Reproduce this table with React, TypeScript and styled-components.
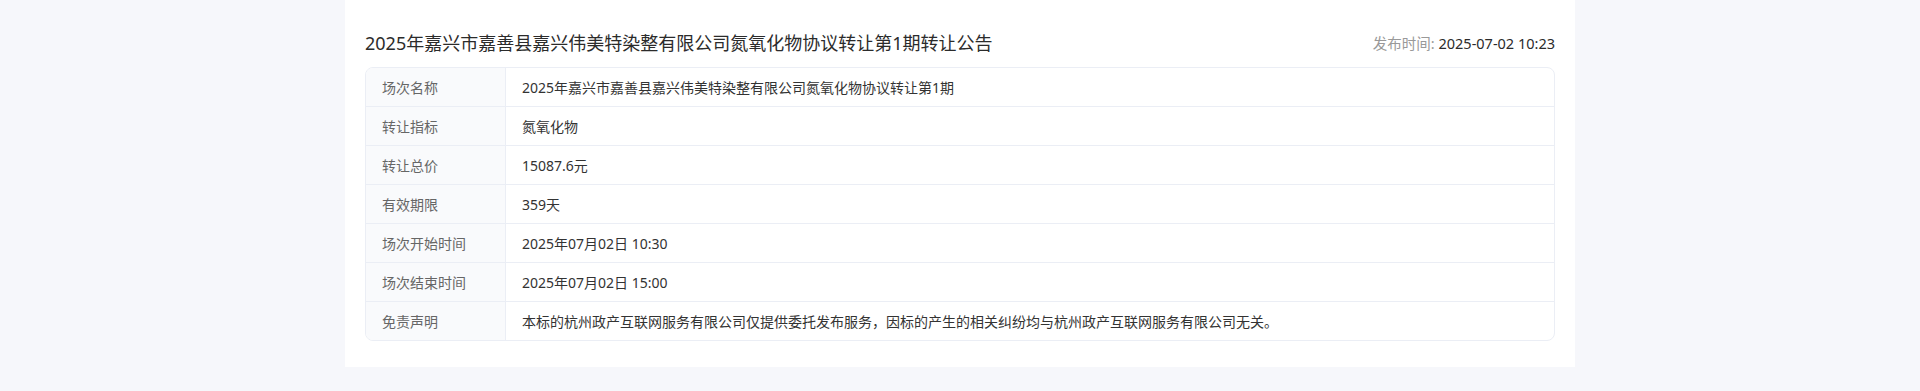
import styled, { createGlobalStyle } from 'styled-components';

type TRow = {
  label: string;
  value: string;
};

const rows: TRow[] = [
  { label: '场次名称', value: '2025年嘉兴市嘉善县嘉兴伟美特染整有限公司氮氧化物协议转让第1期' },
  { label: '转让指标', value: '氮氧化物' },
  { label: '转让总价', value: '15087.6元' },
  { label: '有效期限', value: '359天' },
  { label: '场次开始时间', value: '2025年07月02日 10:30' },
  { label: '场次结束时间', value: '2025年07月02日 15:00' },
  {
    label: '免责声明',
    value:
      '本标的杭州政产互联网服务有限公司仅提供委托发布服务，因标的产生的相关纠纷均与杭州政产互联网服务有限公司无关。',
  },
];

export default function App() {
  return (
    <>
      <GlobalStyle />
      <Page>
        <Card>
          <Header>
            <Title>2025年嘉兴市嘉善县嘉兴伟美特染整有限公司氮氧化物协议转让第1期转让公告</Title>
            <PublishTime>
              <span className='label'>发布时间: </span>
              <span className='value'>2025-07-02 10:23</span>
            </PublishTime>
          </Header>
          <InfoTable>
            {rows.map((row) => (
              <Row key={row.label}>
                <LabelCell>{row.label}</LabelCell>
                <ValueCell>{row.value}</ValueCell>
              </Row>
            ))}
          </InfoTable>
        </Card>
      </Page>
    </>
  );
}

const GlobalStyle = createGlobalStyle`
  body {
    margin: 0;
    background-color: #f6f7fb;
    font-family: 'Noto Sans', 'Noto Sans CJK SC', sans-serif;
  }
`;

const Page = styled.div`
  min-height: 391px;
  background-color: #f6f7fb;
`;

const Card = styled.div`
  width: 1230px;
  margin: 0 auto;
  box-sizing: border-box;
  padding: 31px 20px 26px;
  background-color: #ffffff;
`;

const Header = styled.div`
  display: flex;
  align-items: center;
  justify-content: space-between;
  height: 24px;
  margin-bottom: 12px;
`;

const Title = styled.h1`
  margin: 0;
  font-size: 18px;
  line-height: 24px;
  font-weight: 400;
  color: #2b2b2b;
`;

const PublishTime = styled.div`
  font-size: 14.5px;
  line-height: 24px;
  & .label {
    color: #999999;
  }
  & .value {
    color: #2b2b2b;
  }
`;

const InfoTable = styled.div`
  border: 1px solid #ebeef5;
  border-radius: 8px;
  overflow: hidden;
`;

const Row = styled.div`
  display: grid;
  grid-template-columns: 140px 1fr;
  & + & {
    border-top: 1px solid #ebeef5;
  }
`;

const LabelCell = styled.div`
  box-sizing: border-box;
  height: 38px;
  padding: 0 16px;
  display: flex;
  align-items: center;
  background-color: #f9fafc;
  border-right: 1px solid #ebeef5;
  font-size: 14px;
  color: #666666;
`;

const ValueCell = styled.div`
  box-sizing: border-box;
  height: 38px;
  padding: 0 16px;
  display: flex;
  align-items: center;
  font-size: 14px;
  color: #333333;
`;
